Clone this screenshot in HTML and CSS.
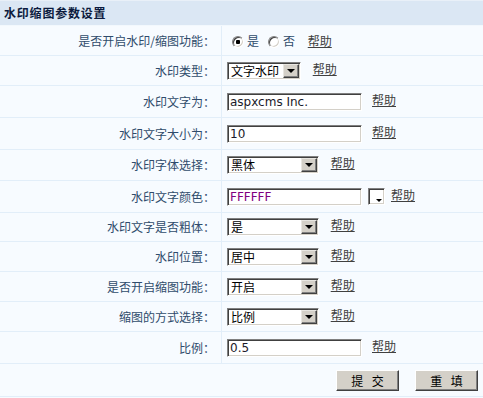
FILE: index.html
```html
<!DOCTYPE html>
<html>
<head>
  <meta charset="utf-8">
  <title>水印缩图参数设置</title>
  <link rel="stylesheet" href="styles.css">
</head>
<body>
  <form>
  <table class="cfg">
    <tr class="hd">
      <td colspan="2">水印缩图参数设置</td>
    </tr>
    <tr class="h30">
      <td class="lbl">是否开启水印/缩图功能：</td>
      <td class="val">
        <input type="radio" name="wm" class="rd" checked><span class="rt">是</span><input type="radio" name="wm" class="rd rd2"><span class="rt">否</span>
        <a href="#" class="help h-rd">帮助</a>
      </td>
    </tr>
    <tr class="h30">
      <td class="lbl">水印类型：</td>
      <td class="val">
        <span class="sel"><select class="s-sm"><option>文字水印</option><option>图片水印</option></select><i class="arr"></i></span>
        <a href="#" class="help">帮助</a>
      </td>
    </tr>
    <tr class="h32">
      <td class="lbl">水印文字为：</td>
      <td class="val"><input type="text" class="txt" value="aspxcms Inc."><a href="#" class="help h-txt">帮助</a></td>
    </tr>
    <tr class="h32">
      <td class="lbl">水印文字大小为：</td>
      <td class="val"><input type="text" class="txt" value="10"><a href="#" class="help h-txt">帮助</a></td>
    </tr>
    <tr class="h31">
      <td class="lbl">水印字体选择：</td>
      <td class="val">
        <span class="sel"><select><option>黑体</option><option>宋体</option></select><i class="arr"></i></span>
        <a href="#" class="help">帮助</a>
      </td>
    </tr>
    <tr class="h32">
      <td class="lbl">水印文字颜色：</td>
      <td class="val"><input type="text" class="txt color" value="FFFFFF"><span class="pick"></span><a href="#" class="help h-pick">帮助</a></td>
    </tr>
    <tr class="h29">
      <td class="lbl">水印文字是否粗体：</td>
      <td class="val">
        <span class="sel"><select><option>是</option><option>否</option></select><i class="arr"></i></span>
        <a href="#" class="help">帮助</a>
      </td>
    </tr>
    <tr class="h30">
      <td class="lbl">水印位置：</td>
      <td class="val">
        <span class="sel"><select><option>居中</option><option>左上</option></select><i class="arr"></i></span>
        <a href="#" class="help">帮助</a>
      </td>
    </tr>
    <tr class="h30">
      <td class="lbl">是否开启缩图功能：</td>
      <td class="val">
        <span class="sel"><select><option>开启</option><option>关闭</option></select><i class="arr"></i></span>
        <a href="#" class="help">帮助</a>
      </td>
    </tr>
    <tr class="h30">
      <td class="lbl">缩图的方式选择：</td>
      <td class="val">
        <span class="sel"><select><option>比例</option><option>固定</option></select><i class="arr"></i></span>
        <a href="#" class="help">帮助</a>
      </td>
    </tr>
    <tr class="h32">
      <td class="lbl">比例：</td>
      <td class="val"><input type="text" class="txt" value="0.5"><a href="#" class="help h-txt">帮助</a></td>
    </tr>
    <tr class="btns">
      <td colspan="2">
        <button type="submit" class="btn">提 交</button><button type="reset" class="btn">重 填</button>
      </td>
    </tr>
  </table>
  </form>
</body>
</html>
```

FILE: styles.css
```css
body {
  margin: 0;
  padding: 0;
  background: #f7fbff;
  font-family: "Noto Sans CJK SC", "DejaVu Sans", sans-serif;
  font-size: 12px;
}
form {
  margin: 0;
}
.cfg {
  width: 483px;
  border-collapse: separate;
  border-spacing: 0;
}
.cfg td {
  box-sizing: border-box;
  padding: 0;
  border-bottom: 1px solid #e2eef9;
  background: #f7fbff;
  vertical-align: middle;
  line-height: 14px;
}
.hd td {
  height: 26px;
  background: #dbe7f4;
  border-top: 1px solid #e9f0f8;
  border-bottom: 1px solid #f2f8fd;
  padding-left: 4px;
  font-size: 12px;
  font-weight: bold;
  letter-spacing: 0.8px;
  color: #0c1b3e;
}
.h29 td { height: 29px; }
.h30 td { height: 30px; }
.h31 td { height: 31px; }
.h32 td { height: 32px; }
.lbl {
  width: 222px;
  text-align: right;
  padding-right: 6px !important;
  border-right: 1px solid #e2eef9;
  color: #2f4b6b;
}
.val {
  padding-left: 5px !important;
  color: #2f4b6b;
  white-space: nowrap;
}

/* radio */
.rd {
  -webkit-appearance: none;
  appearance: none;
  box-sizing: border-box;
  width: 12px;
  height: 12px;
  margin: 0 3px 0 5px;
  vertical-align: -2px;
  border-radius: 50%;
  border: 1px solid;
  border-color: #808080 #ffffff #ffffff #808080;
  box-shadow: inset 1px 1px #404040, inset -1px -1px #d4d0c8;
  background: #fff;
}
.rd:checked {
  background: radial-gradient(circle, #000 0, #000 2px, #fff 2.5px);
}
.rd2 {
  margin-left: 9px;
}
.rt {
  color: #2f4b6b;
}
.help {
  color: #404040;
  text-decoration: underline;
  margin-left: 9px;
}
.h-rd {
  margin-left: 10px;
}
.h-txt {
  margin-left: 10px;
}
.h-pick {
  margin-left: 6px;
}

/* text boxes */
.txt {
  box-sizing: border-box;
  width: 135px;
  height: 18px;
  margin: 0;
  padding: 0 2px;
  vertical-align: middle;
  border: 1px solid;
  border-color: #808080 #ffffff #ffffff #808080;
  box-shadow: inset 1px 1px #404040, inset -1px -1px #d4d0c8;
  background: #fff;
  font-family: "DejaVu Sans", sans-serif;
  font-size: 12px;
  color: #1a1a2a;
  outline: none;
}
.color {
  color: #800080;
}
.pick {
  display: inline-block;
  position: relative;
  box-sizing: border-box;
  width: 17px;
  height: 17px;
  margin-left: 6px;
  vertical-align: middle;
  border: 1px solid;
  border-color: #808080 #ffffff #ffffff #808080;
  box-shadow: inset 1px 1px #404040, inset -1px -1px #d4d0c8;
  background: #fff;
}
.pick::after {
  content: "";
  position: absolute;
  right: 2px;
  bottom: 2px;
  border-left: 3px solid transparent;
  border-right: 3px solid transparent;
  border-top: 3px solid #000;
}

/* selects */
.sel {
  position: relative;
  display: inline-block;
  vertical-align: middle;
}
.sel select {
  -webkit-appearance: none;
  appearance: none;
  box-sizing: border-box;
  width: 92px;
  height: 18px;
  margin: 0;
  padding: 0 0 0 3px;
  border: 1px solid;
  border-color: #808080 #ffffff #ffffff #808080;
  box-shadow: inset 1px 1px #404040, inset -1px -1px #d4d0c8;
  background: #fff;
  font-family: "Noto Sans CJK SC", sans-serif;
  font-size: 12px;
  line-height: 14px;
  color: #000;
  outline: none;
  display: block;
}
.sel select.s-sm {
  width: 74px;
}
.arr {
  position: absolute;
  right: 2px;
  top: 2px;
  box-sizing: border-box;
  width: 16px;
  height: 14px;
  background: #d4d0c8;
  border: 1px solid;
  border-color: #e8e6e1 #404040 #404040 #e8e6e1;
  box-shadow: inset -1px -1px #808080;
  pointer-events: none;
}
.arr::after {
  content: "";
  position: absolute;
  left: 3px;
  top: 4px;
  border-left: 4px solid transparent;
  border-right: 4px solid transparent;
  border-top: 4px solid #000;
}

/* buttons */
.btns td {
  height: 33px;
  text-align: right;
  padding-right: 5px;
  border-bottom: 1px solid #e2eef9;
}
.btn {
  box-sizing: border-box;
  width: 63px;
  height: 21px;
  margin: 0 0 0 16px;
  padding: 0 0 0 3px;
  background: #d4d0c8;
  border: 1px solid;
  border-color: #ffffff #404040 #404040 #ffffff;
  box-shadow: inset -1px -1px #808080;
  font-family: "Noto Sans CJK SC", sans-serif;
  font-size: 12px;
  color: #000;
  letter-spacing: 3px;
  vertical-align: middle;
}
```
